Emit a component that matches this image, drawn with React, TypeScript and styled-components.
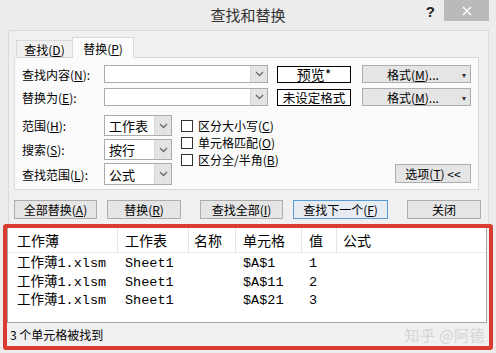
import React from "react";
import styled, { createGlobalStyle } from "styled-components";

const GlobalStyle = createGlobalStyle`
  html, body { margin: 0; padding: 0; }
  body {
    background: #ececec;
    font-family: "Noto Sans CJK SC", "Noto Sans", sans-serif;
    font-size: 12px;
    color: #000;
  }
  * { box-sizing: border-box; }
`;

const Window = styled.div`
  width: 496px;
  height: 353px;
  background: #ececec;
  display: flex;
  flex-direction: column;
  overflow: hidden;
`;

const TitleBar = styled.div`
  height: 30px;
  flex-shrink: 0;
  display: grid;
  grid-template-columns: 1fr auto 1fr;
  align-items: start;
`;

const Title = styled.div`
  grid-column: 2;
  font-size: 15px;
  line-height: 30px;
  color: #333;
`;

const TitleControls = styled.div`
  grid-column: 3;
  justify-self: end;
  display: flex;
  align-items: flex-start;
`;

const Help = styled.span`
  font-family: "Liberation Sans", sans-serif;
  font-weight: bold;
  font-size: 15px;
  line-height: 15px;
  color: #222;
  margin-top: 4px;
  margin-right: 9px;
`;

const CloseBtn = styled.div`
  width: 45px;
  height: 21px;
  background: #bababa;
  margin-right: 7px;
  display: flex;
  align-items: center;
  justify-content: center;
`;

const Frame = styled.div`
  margin-left: 8px;
  width: 481px;
  flex-shrink: 0;
  border: 1px solid #dadada;
  border-bottom: none;
  background: #f0f0f0;
  padding: 6px 0 5px 5px;
`;

const TabStrip = styled.div`
  display: flex;
  align-items: flex-end;
  height: 20px;
  padding-left: 2px;
`;

const Tab = styled.div<{ $active?: boolean }>`
  display: flex;
  align-items: center;
  justify-content: center;
  border: 1px solid #d9d9d9;
  border-bottom: none;
  background: ${(p) => (p.$active ? "#fbfbfb" : "#f0f0f0")};
  width: ${(p) => (p.$active ? "62px" : "57px")};
  height: ${(p) => (p.$active ? "21px" : "17px")};
  margin-bottom: ${(p) => (p.$active ? "-1px" : "0")};
  margin-left: ${(p) => (p.$active ? "-1px" : "0")};
  position: relative;
  z-index: ${(p) => (p.$active ? 1 : 0)};
  font-size: 12px;
  padding-top: ${(p) => (p.$active ? "0" : "1px")};
`;

const Key = styled.span`
  text-decoration: underline;
`;

const Panel = styled.div`
  width: 465px;
  height: 133px;
  border: 1px solid #d9d9d9;
  background: #fbfbfb;
  padding: 7px 7px 0 7px;
  display: flex;
  flex-direction: column;
`;

const Row = styled.div<{ $gap?: number }>`
  display: flex;
  align-items: center;
  height: 18px;
  margin-top: ${(p) => p.$gap ?? 0}px;
`;

const Label = styled.div`
  width: 82px;
  flex-shrink: 0;
  white-space: nowrap;
`;

const Combo = styled.div<{ $w: number; $h: number }>`
  width: ${(p) => p.$w}px;
  height: ${(p) => p.$h}px;
  border: 1px solid #ababab;
  background: #fff;
  display: flex;
  align-items: stretch;
  justify-content: space-between;
  flex-shrink: 0;
`;

const ComboText = styled.span`
  padding-left: 4px;
  font-size: 13px;
  display: flex;
  align-items: center;
`;

const DropBtn = styled.div`
  width: 17px;
  background: #e4e4e4;
  border-left: 1px solid #d6d6d6;
  display: flex;
  align-items: center;
  justify-content: center;
`;

const Preview = styled.div<{ $big?: boolean }>`
  margin-left: 9px;
  width: 74px;
  height: 17px;
  border: 1px solid #000;
  background: #fff;
  display: flex;
  align-items: center;
  justify-content: center;
  font-size: ${(p) => (p.$big ? "14px" : "12.5px")};
  flex-shrink: 0;
`;

const Button = styled.div<{ $w: number; $h?: number; $focus?: boolean }>`
  width: ${(p) => p.$w}px;
  height: ${(p) => p.$h ?? 19}px;
  border: 1px solid ${(p) => (p.$focus ? "#5b9bd5" : "#adadad")};
  background: ${(p) => (p.$focus ? "#e6ecf2" : "#e5e5e5")};
  display: flex;
  align-items: center;
  justify-content: center;
  flex-shrink: 0;
  font-size: 12px;
  white-space: nowrap;
`;

const FormatBtn = styled(Button)`
  margin-left: 11px;
  justify-content: flex-start;
  padding-left: 24px;
`;

const Caret = styled.span`
  margin-left: auto;
  margin-right: 4px;
  font-size: 8px;
  color: #333;
`;

const Lower = styled.div`
  display: flex;
  margin-top: 9px;
`;

const SelectCol = styled.div`
  display: flex;
  flex-direction: column;
  gap: 3px;
`;

const SelectRow = styled.div`
  display: flex;
  align-items: center;
`;

const CheckCol = styled.div`
  display: flex;
  flex-direction: column;
  margin-left: 9px;
  margin-top: 2px;
`;

const CheckRow = styled.div`
  display: flex;
  align-items: center;
  height: 17px;
  gap: 5px;
  white-space: nowrap;
`;

const Box = styled.span`
  width: 12px;
  height: 12px;
  border: 1px solid #333;
  background: #fff;
`;

const OptionsBtn = styled(Button)`
  margin-left: auto;
  align-self: flex-end;
  margin-bottom: 2px;
`;

const ButtonRow = styled.div`
  display: flex;
  margin-top: 10px;
`;

const Spacer = styled.div<{ $w: number }>`
  width: ${(p) => p.$w}px;
  flex-shrink: 0;
`;

const Results = styled.div`
  margin-left: 3px;
  width: 490px;
  height: 126px;
  border: 4px solid #dc3b30;
  border-radius: 3px;
  display: flex;
  flex-direction: column;
  background: #f0f0f0;
`;

const List = styled.div`
  height: 95px;
  margin-right: 2px;
  background: #fff;
  border: 1px solid #a7a7a7;
  border-top: none;
  flex-shrink: 0;
`;

const Cols = styled.div`
  display: grid;
  grid-template-columns: 110px 71px 47px 66px 35px 1fr;
`;

const HeaderRow = styled(Cols)`
  height: 25px;
  border-bottom: 1px solid #ececec;
  font-size: 14px;
`;

const HeadCell = styled.div<{ $pad?: number; $last?: boolean }>`
  display: flex;
  align-items: center;
  padding-left: ${(p) => p.$pad ?? 7}px;
  border-right: ${(p) => (p.$last ? "none" : "1px solid #e6e6e6")};
`;

const Body = styled.div`
  padding-top: 2px;
`;

const DataRow = styled(Cols)`
  height: 18.5px;
  font-family: "Liberation Mono", "Noto Sans CJK SC", monospace;
  font-size: 13.5px;
  line-height: 18.5px;
`;

const Cell = styled.div<{ $pad?: number }>`
  padding-left: ${(p) => p.$pad ?? 7}px;
  white-space: nowrap;
`;

const StatusBar = styled.div`
  flex: 1;
  display: flex;
  align-items: center;
  justify-content: space-between;
  padding: 0 4px 0 3px;
  font-size: 12px;
`;

const Watermark = styled.span`
  color: rgba(205, 205, 205, 0.8);
  font-size: 15px;
  letter-spacing: 0.5px;
`;

const Chevron = () => (
  <svg width="9" height="6" viewBox="0 0 9 6">
    <path d="M1 1 L4.5 4.5 L8 1" fill="none" stroke="#6d6d6d" strokeWidth="1.4" />
  </svg>
);

const CloseIcon = () => (
  <svg width="10" height="10" viewBox="0 0 10 10">
    <path d="M1 1 L9 9 M9 1 L1 9" stroke="#fff" strokeWidth="1.4" />
  </svg>
);

const columns = ["工作薄", "工作表", "名称", "单元格", "值", "公式"];
const pads = [9, 7, 5, 7, 7, 6];
const rows = [
  ["工作薄1.xlsm", "Sheet1", "", "$A$1", "1", ""],
  ["工作薄1.xlsm", "Sheet1", "", "$A$11", "2", ""],
  ["工作薄1.xlsm", "Sheet1", "", "$A$21", "3", ""],
];

export default function App() {
  return (
    <>
      <GlobalStyle />
      <Window>
        <TitleBar>
          <Title>查找和替换</Title>
          <TitleControls>
            <Help>?</Help>
            <CloseBtn>
              <CloseIcon />
            </CloseBtn>
          </TitleControls>
        </TitleBar>
        <Frame>
          <TabStrip>
            <Tab>
              查找(<Key>D</Key>)
            </Tab>
            <Tab $active>
              替换(<Key>P</Key>)
            </Tab>
          </TabStrip>
          <Panel>
            <Row>
              <Label>
                查找内容(<Key>N</Key>):
              </Label>
              <Combo $w={164} $h={18}>
                <span />
                <DropBtn>
                  <Chevron />
                </DropBtn>
              </Combo>
              <Preview $big>预览*</Preview>
              <FormatBtn $w={109} $h={18}>
                格式(<Key>M</Key>)...
                <Caret>▾</Caret>
              </FormatBtn>
            </Row>
            <Row $gap={5}>
              <Label>
                替换为(<Key>E</Key>):
              </Label>
              <Combo $w={164} $h={18}>
                <span />
                <DropBtn>
                  <Chevron />
                </DropBtn>
              </Combo>
              <Preview>未设定格式</Preview>
              <FormatBtn $w={109} $h={18}>
                格式(<Key>M</Key>)...
                <Caret>▾</Caret>
              </FormatBtn>
            </Row>
            <Lower>
              <SelectCol>
                <SelectRow>
                  <Label>
                    范围(<Key>H</Key>):
                  </Label>
                  <Combo $w={68} $h={21}>
                    <ComboText>工作表</ComboText>
                    <DropBtn>
                      <Chevron />
                    </DropBtn>
                  </Combo>
                </SelectRow>
                <SelectRow>
                  <Label>
                    搜索(<Key>S</Key>):
                  </Label>
                  <Combo $w={68} $h={21}>
                    <ComboText>按行</ComboText>
                    <DropBtn>
                      <Chevron />
                    </DropBtn>
                  </Combo>
                </SelectRow>
                <SelectRow>
                  <Label>
                    查找范围(<Key>L</Key>):
                  </Label>
                  <Combo $w={68} $h={22}>
                    <ComboText>公式</ComboText>
                    <DropBtn>
                      <Chevron />
                    </DropBtn>
                  </Combo>
                </SelectRow>
              </SelectCol>
              <CheckCol>
                <CheckRow>
                  <Box />
                  <span>
                    区分大小写(<Key>C</Key>)
                  </span>
                </CheckRow>
                <CheckRow>
                  <Box />
                  <span>
                    单元格匹配(<Key>O</Key>)
                  </span>
                </CheckRow>
                <CheckRow>
                  <Box />
                  <span>
                    区分全/半角(<Key>B</Key>)
                  </span>
                </CheckRow>
              </CheckCol>
              <OptionsBtn $w={76}>
                选项(<Key>T</Key>)&nbsp;&lt;&lt;
              </OptionsBtn>
            </Lower>
          </Panel>
          <ButtonRow>
            <Button $w={83}>
              全部替换(<Key>A</Key>)
            </Button>
            <Spacer $w={10} />
            <Button $w={74}>
              替换(<Key>R</Key>)
            </Button>
            <Spacer $w={19} />
            <Button $w={83}>
              查找全部(<Key>I</Key>)
            </Button>
            <Spacer $w={10} />
            <Button $w={95} $focus>
              查找下一个(<Key>F</Key>)
            </Button>
            <Spacer $w={19} />
            <Button $w={74}>关闭</Button>
          </ButtonRow>
        </Frame>
        <Results>
          <List>
            <HeaderRow>
              {columns.map((c, i) => (
                <HeadCell key={c} $pad={pads[i]} $last={i === columns.length - 1}>
                  {c}
                </HeadCell>
              ))}
            </HeaderRow>
            <Body>
              {rows.map((r, ri) => (
                <DataRow key={ri}>
                  {r.map((v, ci) => (
                    <Cell key={ci} $pad={pads[ci]}>
                      {v}
                    </Cell>
                  ))}
                </DataRow>
              ))}
            </Body>
          </List>
          <StatusBar>
            <span>3 个单元格被找到</span>
            <Watermark>知乎 @阿德</Watermark>
          </StatusBar>
        </Results>
      </Window>
    </>
  );
}
